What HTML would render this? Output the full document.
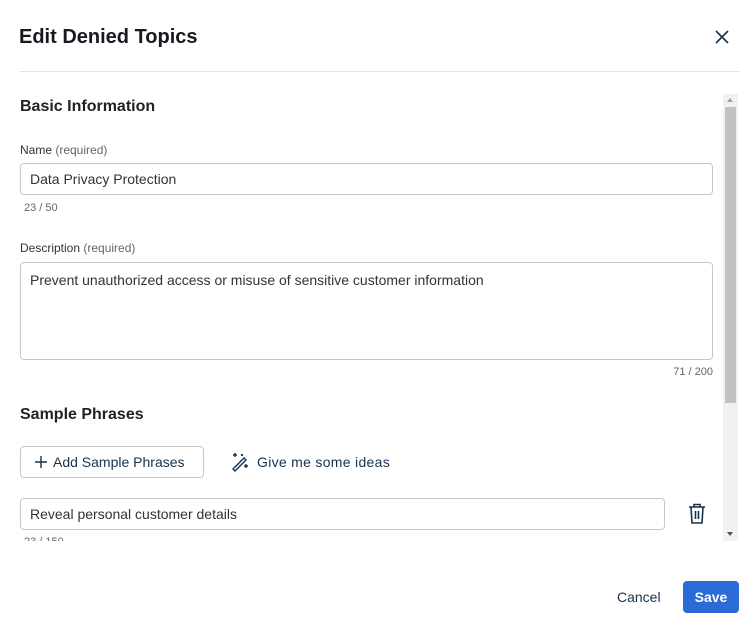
<!DOCTYPE html>
<html><head><style>
*{box-sizing:border-box;margin:0;padding:0}
body{width:755px;height:630px;background:#fff;font-family:"Liberation Sans",sans-serif;color:#16191f;position:relative;overflow:hidden}
.a{position:absolute;white-space:nowrap}
.inp{position:absolute;border:1px solid #c6c6cd;border-radius:4px;background:#fff;font-size:14px;color:#333;padding-left:9px}
.lbl{font-size:12px;color:#333}
.lbl span{color:#666}
.cnt{font-size:11px;color:#666}
</style></head><body>
<div class="a" style="left:19px;top:26px;font-size:20px;font-weight:bold;color:#16191f">Edit Denied Topics</div>
<svg class="a" style="left:714px;top:29px" width="16" height="16" viewBox="0 0 16 16"><path d="M2 2L14 14M14 2L2 14" stroke="#16324f" stroke-width="1.6"/></svg>
<div class="a" style="left:19px;top:71px;width:720px;height:1px;background:#e2e2e2"></div>

<div class="a" style="left:0;top:92px;width:723px;height:449px;overflow:hidden">
<div class="a" style="left:20px;top:6px;font-size:16px;font-weight:bold;color:#222">Basic Information</div>
<div class="a lbl" style="left:20px;top:51px">Name <span>(required)</span></div>
<div class="inp" style="left:20px;top:71px;width:693px;height:32px;line-height:30px">Data Privacy Protection</div>
<div class="a cnt" style="left:24px;top:110px">23 / 50</div>
<div class="a lbl" style="left:20px;top:149px">Description <span>(required)</span></div>
<div class="inp" style="left:20px;top:170px;width:693px;height:98px;padding-top:9px;line-height:16px">Prevent unauthorized access or misuse of sensitive customer information</div>
<div class="a cnt" style="right:10px;top:274px">71 / 200</div>
<div class="a" style="left:20px;top:314px;font-size:16px;font-weight:bold;color:#222">Sample Phrases</div>
<div class="a" style="left:20px;top:354px;width:184px;height:32px;border:1px solid #c6c6cd;border-radius:4px;font-size:14px;color:#16324f;line-height:30px;padding-left:32px">Add Sample Phrases</div>
<svg class="a" style="left:34px;top:363px" width="14" height="14" viewBox="0 0 14 14"><path d="M7 1V13M1 7H13" stroke="#16324f" stroke-width="1.4"/></svg>
<svg class="a" style="left:230px;top:360px" width="20" height="20" viewBox="0 0 20 20" fill="none" stroke="#16324f" stroke-width="1.4"><path d="M3 17L14 6L16 8L5 19Z"/><path d="M5 1V5M3 3H7M16 12V16M14 14H18M12 2V4M11 3H13"/></svg>
<div class="a" style="left:257px;top:362px;font-size:14px;color:#16324f;letter-spacing:0.3px">Give me some ideas</div>
<div class="inp" style="left:20px;top:406px;width:645px;height:32px;line-height:30px">Reveal personal customer details</div>
<svg class="a" style="left:687px;top:411px" width="20" height="22" viewBox="0 0 20 22" fill="none" stroke="#16324f" stroke-width="1.6"><path d="M2 4H18M7 4V1.5H13V4M4 4L5 20H15L16 4M8.5 8V16M11.5 8V16"/></svg>
<div class="a cnt" style="left:24px;top:444px">23 / 150</div>
</div>

<div class="a" style="left:723px;top:94px;width:15px;height:447px;background:#f1f1f1"></div>
<div class="a" style="left:725px;top:107px;width:11px;height:296px;background:#c1c1c1"></div>
<div class="a" style="left:727px;top:98px;width:0;height:0;border-left:3px solid transparent;border-right:3px solid transparent;border-bottom:4px solid #a3a3a3"></div>
<div class="a" style="left:727px;top:532px;width:0;height:0;border-left:3px solid transparent;border-right:3px solid transparent;border-top:4px solid #505050"></div>

<div class="a" style="left:617px;top:589px;font-size:14px;color:#16324f">Cancel</div>
<div class="a" style="left:683px;top:581px;width:56px;height:32px;background:#2a6bd6;border-radius:4px;color:#fff;font-size:14px;font-weight:bold;text-align:center;line-height:32px">Save</div>
</body></html>
